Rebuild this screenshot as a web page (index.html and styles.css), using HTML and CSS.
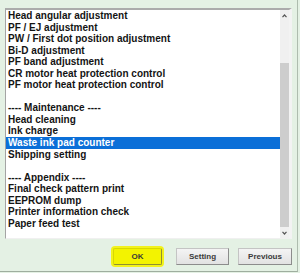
FILE: index.html
```html
<!DOCTYPE html>
<html>
<head>
<meta charset="utf-8">
<link rel="stylesheet" href="styles.css">
</head>
<body>
<div class="window">
  <div class="listbox">
    <ul class="items">
      <li>Head angular adjustment</li>
      <li>PF / EJ adjustment</li>
      <li>PW / First dot position adjustment</li>
      <li>Bi-D adjustment</li>
      <li>PF band adjustment</li>
      <li>CR motor heat protection control</li>
      <li>PF motor heat protection control</li>
      <li class="blank">&nbsp;</li>
      <li>---- Maintenance ----</li>
      <li>Head cleaning</li>
      <li>Ink charge</li>
      <li class="selected">Waste ink pad counter</li>
      <li>Shipping setting</li>
      <li class="blank">&nbsp;</li>
      <li>---- Appendix ----</li>
      <li>Final check pattern print</li>
      <li>EEPROM dump</li>
      <li>Printer information check</li>
      <li>Paper feed test</li>
    </ul>
    <div class="scrollbar">
      <div class="sb-btn sb-up"><svg width="5" height="4" viewBox="0 0 5 4"><path d="M0.5 3.2 L2.5 1 L4.5 3.2" fill="none" stroke="#555" stroke-width="1.2"/></svg></div>
      <div class="sb-track"></div>
      <div class="sb-thumb"></div>
      <div class="sb-btn sb-down"><svg width="5" height="4" viewBox="0 0 5 4"><path d="M0.5 0.8 L2.5 3 L4.5 0.8" fill="none" stroke="#555" stroke-width="1.2"/></svg></div>
    </div>
  </div>
  <div class="buttons">
    <button class="btn btn-ok">OK</button>
    <button class="btn btn-setting">Setting</button>
    <button class="btn btn-previous">Previous</button>
  </div>
</div>
</body>
</html>
```

FILE: styles.css
```css
html, body {
  margin: 0;
  padding: 0;
}
body {
  width: 300px;
  height: 273px;
  background: #e4f1e4;
  font-family: "Liberation Sans", Arial, sans-serif;
  overflow: hidden;
}
.window {
  width: 298px;
  height: 272px;
  box-sizing: border-box;
  border-right: 1px solid #aebcae;
  border-bottom: 1px solid #9fae9f;
  padding: 8px 0 0 5px;
  display: flex;
  flex-direction: column;
}
.listbox {
  width: 287px;
  height: 231px;
  box-sizing: border-box;
  display: flex;
  background: #fff;
  border-top: 2px solid #ababab;
  border-left: 1px solid #a4a4a4;
  border-right: 3px solid #f3f3f3;
  border-bottom: 1px solid #f0f0f0;
}
.items {
  list-style: none;
  margin: 0;
  padding: 0;
  flex: 1;
  font-size: 10px;
  font-weight: bold;
  line-height: 11.55px;
  color: #141414;
  white-space: nowrap;
  overflow: hidden;
}
.items li {
  padding-left: 2px;
  height: 11.55px;
}
.items li.selected {
  background: #0b6fd8;
  color: #fff;
}
.scrollbar {
  width: 9px;
  display: flex;
  flex-direction: column;
  background: #f0f0f0;
}
.sb-btn {
  display: flex;
  justify-content: center;
  align-items: center;
}
.sb-up {
  height: 12px;
}
.sb-track {
  height: 41px;
}
.sb-thumb {
  height: 164px;
  background: #cdcdcd;
}
.sb-down {
  flex: 1;
}
.buttons {
  width: 287px;
  display: flex;
  justify-content: flex-end;
  margin-top: 9px;
}
.btn {
  height: 17px;
  box-sizing: border-box;
  padding: 0;
  font-family: "Liberation Sans", Arial, sans-serif;
  font-size: 8px;
  font-weight: bold;
  color: #3a3a3a;
  background: linear-gradient(#f4f4f4, #e2e2e2);
  border: 1px solid #c4c4c4;
  border-right-color: #8c8c8c;
  border-bottom-color: #8c8c8c;
}
.btn-ok {
  width: 49px;
  background: #f3f300;
  border-color: #d8d800;
  border-right-color: #8f8f30;
  border-bottom-color: #8f8f30;
  box-shadow: 0 0 0 2px #f2f21c;
  border-radius: 2px;
}
.btn-setting {
  width: 53px;
  margin-left: 14px;
}
.btn-previous {
  width: 54px;
  margin-left: 9px;
}
```
